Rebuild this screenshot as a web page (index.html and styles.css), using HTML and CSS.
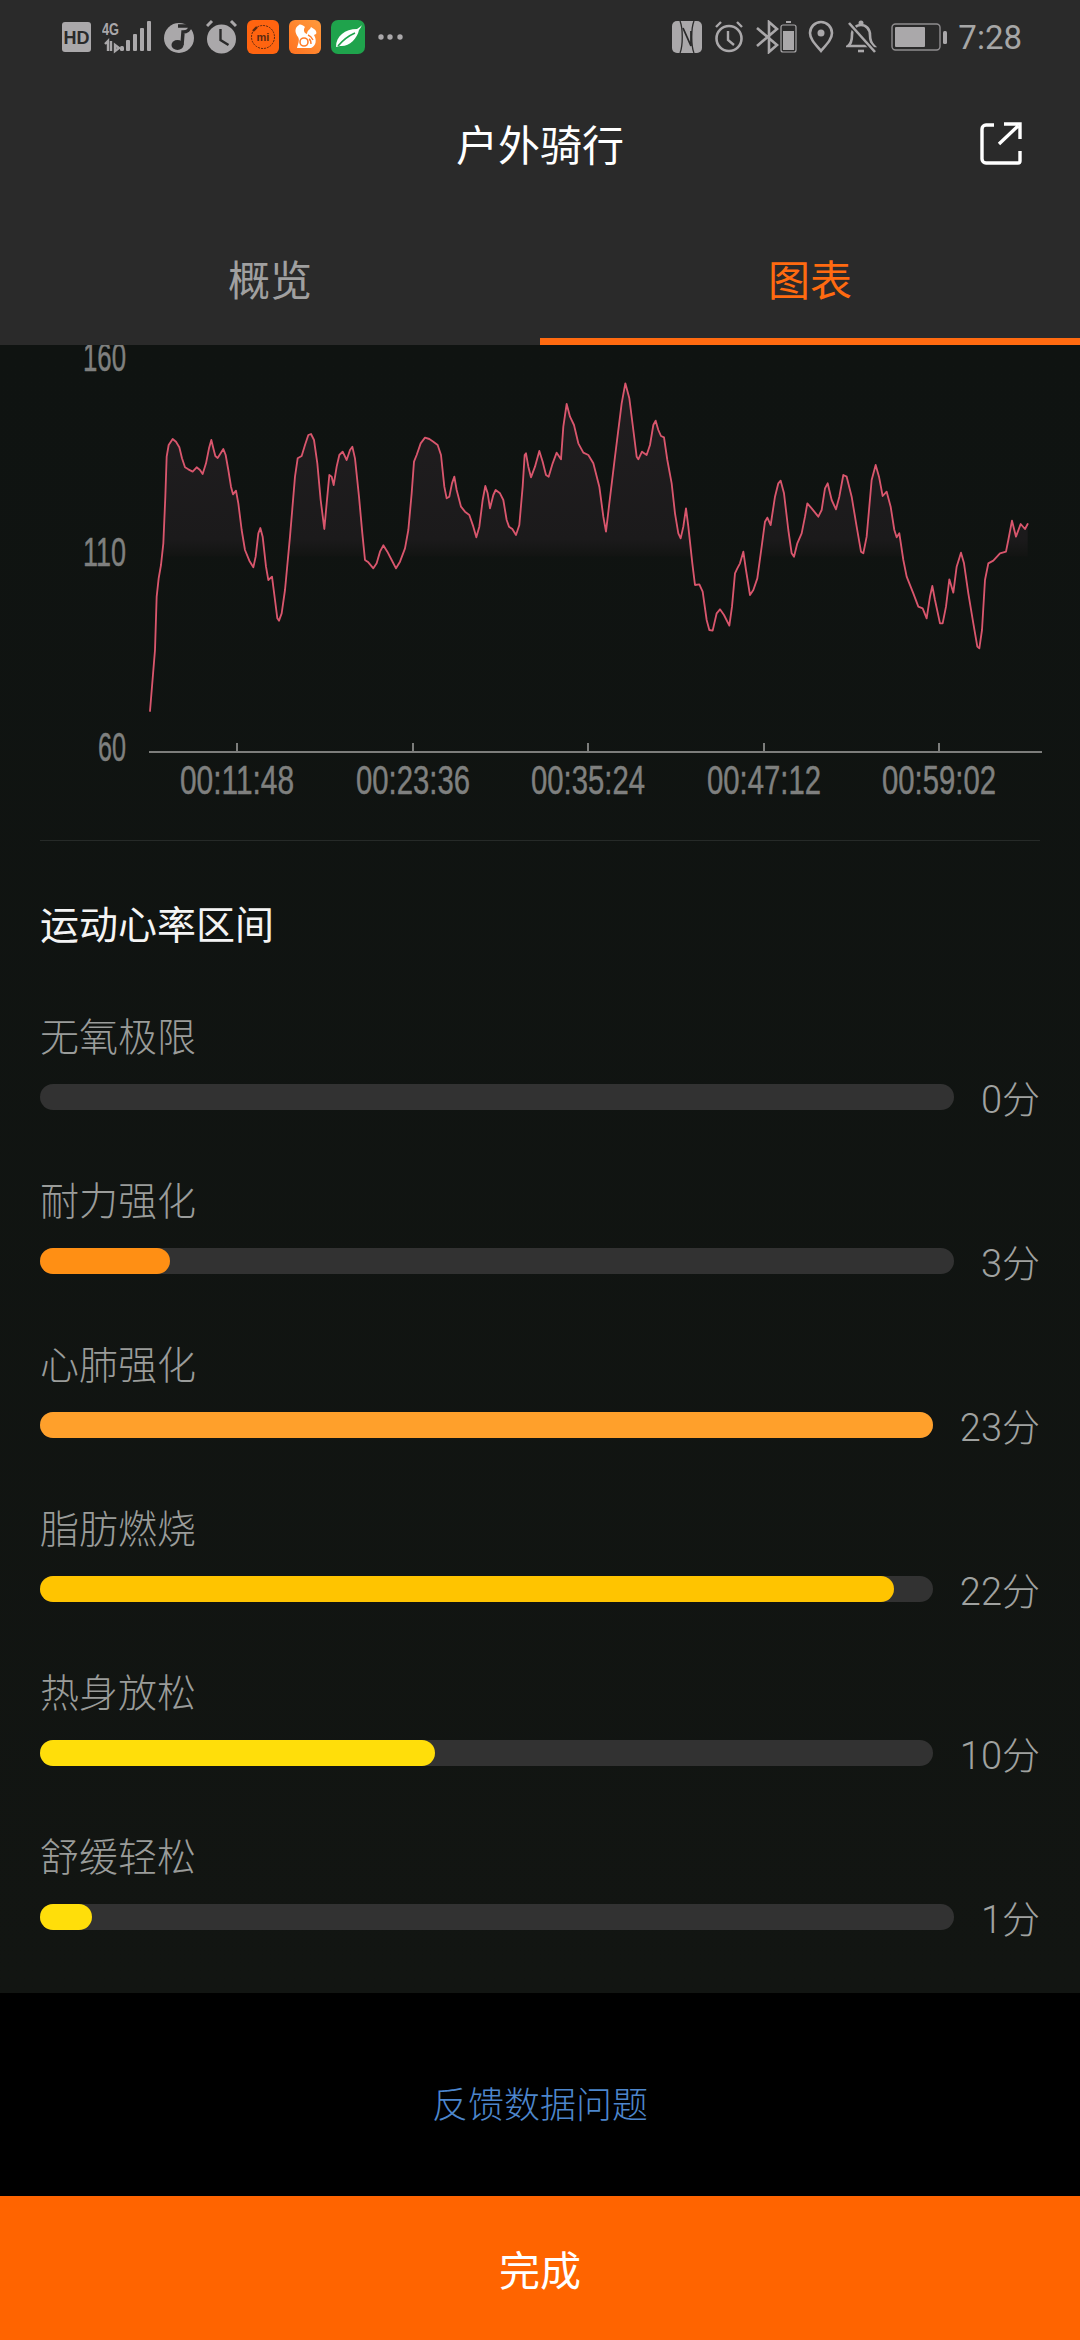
FILE: index.html
```html
<!DOCTYPE html>
<html lang="zh-CN">
<head>
    <meta charset="UTF-8">
    <title>户外骑行</title>
    <link rel="stylesheet" href="styles.css">
</head>
<body>
<div class="page">
    <header class="top">
        <!-- 状态栏 -->
        <div class="status">
            <div class="status-group">
                <svg width="30" height="32" viewBox="0 0 30 32"><rect y="1" width="29" height="30" rx="3" fill="#aaa8aa"/><text x="14.5" y="22.5" class="ic-hd">HD</text></svg>
                <svg width="52" height="34" viewBox="0 0 52 34">
                    <text x="0" y="15" class="ic-4g" textLength="17" lengthAdjust="spacingAndGlyphs">4G</text>
                    <path d="M3 24l3-3v10M9 21v10M13 25v6l4-3z" fill="none" stroke="#aaa8aa" stroke-width="2.4"/>
                    <g fill="#aaa8aa"><rect x="18" y="26" width="4" height="5" rx="1.5"/><rect x="24" y="20" width="4" height="11" rx="1"/><rect x="31" y="14" width="4" height="17" rx="1"/><rect x="38" y="8" width="4" height="23" rx="1"/><rect x="45" y="1" width="4" height="30" rx="1"/></g>
                </svg>
                <svg width="32" height="34" viewBox="0 0 32 34"><circle cx="15" cy="18" r="15" fill="#aaa8aa"/><path d="M14 6h12c0 4-3 6-7 6l-1 13" fill="none" stroke="#2a2a2a" stroke-width="3.5"/><ellipse cx="13.5" cy="25" rx="6" ry="5" fill="#2a2a2a"/></svg>
                <svg width="31" height="36" viewBox="0 0 31 36"><circle cx="15.5" cy="20" r="14.5" fill="#aaa8aa"/><path d="M1 7l5-5M30 7l-5-5" stroke="#aaa8aa" stroke-width="3"/><path d="M14.5 10v11l8 5" fill="none" stroke="#2a2a2a" stroke-width="2.4"/></svg>
                <svg width="32" height="34" viewBox="0 0 32 34"><rect width="32" height="34" rx="6" fill="#ff6410"/><circle cx="16" cy="17" r="11.5" fill="none" stroke="#5c2a10" stroke-width="1" stroke-dasharray="2 1"/><path d="M6 11l4-4" stroke="#5c2a10" stroke-width="2.4"/><text x="16" y="21" class="ic-mi">mi</text></svg>
                <svg width="32" height="34" viewBox="0 0 32 34">
                    <defs><linearGradient id="ucBg" x1="0" y1="1" x2="1" y2="0"><stop offset="0" stop-color="#ff7220"/><stop offset="1" stop-color="#ff9a3c"/></linearGradient></defs>
                    <rect width="32" height="34" rx="6" fill="url(#ucBg)"/>
                    <path d="M10 5C5 8 6 13 9 17c2 3 0 7-1 11h14c5-2 6-8 3-13l2-1c1-1 0-4-2-5l-3-2-1 2c-2 1-3 3-3 5-3-1-4-4-2-7-2-2-5-3-6-2z" fill="#fff"/>
                    <circle cx="15" cy="22" r="4" fill="none" stroke="#ff7d2a" stroke-width="1.6"/>
                    <path d="M19 15c3 1 4 3 5 5M20 19c2 1 2 3 2 5" fill="none" stroke="#ff7d2a" stroke-width="1.4"/>
                </svg>
                <svg width="35" height="34" viewBox="0 0 35 34"><rect width="34" height="34" rx="7" fill="#1fa34c"/><path d="M5 27C5 16 14 9 26 9c2-1 4-3 5-4-1 2-2 4-3 5-2 9-10 17-19 16z" fill="#fff"/><path d="M7 26c5-6 10-10 17-13" fill="none" stroke="#1fa34c" stroke-width="1.6"/></svg>
                <svg width="28" height="34" viewBox="0 0 28 34"><g fill="#aaa8aa"><circle cx="5" cy="17" r="2.7"/><circle cx="14" cy="17" r="2.7"/><circle cx="24" cy="17" r="2.7"/></g></svg>
            </div>
            <div class="status-group">
                <svg width="30" height="32" viewBox="0 0 30 32"><rect width="30" height="32" rx="5" fill="#aaa8aa"/><path d="M8 0c3 7 3 25 0 32M22 0c-3 7-3 25 0 32" fill="none" stroke="#2a2a2a" stroke-width="1.3"/><path d="M11 7l8 18V10" fill="none" stroke="#2a2a2a" stroke-width="1.8"/></svg>
                <svg width="34" height="34" viewBox="0 0 34 34"><circle cx="17" cy="18.5" r="12.5" fill="none" stroke="#aaa8aa" stroke-width="2.6"/><path d="M4 7l5-5M30 7l-5-5" stroke="#aaa8aa" stroke-width="2.4"/><path d="M16 11v9l6 5" fill="none" stroke="#aaa8aa" stroke-width="2.4"/></svg>
                <svg width="42" height="34" viewBox="0 0 42 34"><path d="M1 8l20 17-8 7V2l8 7L1 26" fill="none" stroke="#aaa8aa" stroke-width="2.6"/><rect x="25" y="5" width="15" height="27" rx="2" fill="none" stroke="#aaa8aa" stroke-width="1.2"/><rect x="30" y="1" width="5" height="2" fill="#aaa8aa"/><rect x="27" y="11" width="11" height="19" fill="#aaa8aa"/></svg>
                <svg width="28" height="34" viewBox="0 0 28 34"><path d="M13 31C7 24 2 19 2 13a11 11 0 0122 0c0 6-5 11-11 18z" fill="none" stroke="#aaa8aa" stroke-width="2.6"/><circle cx="13" cy="13" r="3.5" fill="#aaa8aa"/></svg>
                <svg width="35" height="36" viewBox="0 0 35 36"><path d="M2 27c3-2 4-5 4-11 0-6 4-10 9-10s9 4 9 10c0 4 1 8 4 11z" fill="none" stroke="#aaa8aa" stroke-width="2.6"/><path d="M2 3l27 30" stroke="#2a2a2a" stroke-width="5"/><path d="M3 4l26 29" stroke="#aaa8aa" stroke-width="2.6"/><path d="M12 32h6" stroke="#aaa8aa" stroke-width="2.6"/><circle cx="15" cy="4" r="2.5" fill="#aaa8aa"/></svg>
                <svg width="57" height="30" viewBox="0 0 57 30"><rect x="1" y="2" width="48" height="26" rx="3.5" fill="none" stroke="#8f8d8f" stroke-width="1.4"/><rect x="4" y="5" width="30" height="20" rx="1" fill="#aaa8aa"/><rect x="52" y="9" width="4" height="13" rx="1.5" fill="#aaa8aa"/></svg>
                <span class="clock">7:28</span>
            </div>
        </div>
        <!-- 标题 -->
        <div class="title-bar">
            <span></span>
            <h1>户外骑行</h1>
            <svg class="share" width="42" height="44" viewBox="0 0 42 44"><path d="M14 4H6a4 4 0 00-4 4v30a4 4 0 004 4h32a2 2 0 002-2V30" fill="none" stroke="#fff" stroke-width="3.4"/><path d="M19 23L38 5M24 3h16v15" fill="none" stroke="#fff" stroke-width="3.4"/></svg>
        </div>
        <!-- tab -->
        <div class="tabs">
            <div class="tab">概览</div>
            <div class="tab on">图表</div>
        </div>
    </header>

    <main class="content">
        <!-- 心率曲线 -->
        <svg class="chart" width="1080" height="495" viewBox="0 0 1080 495">
            <defs>
                <linearGradient id="hrFill" gradientUnits="userSpaceOnUse" x1="0" y1="150" x2="0" y2="680">
                    <stop offset="0" stop-color="#211e20"/>
                    <stop offset=".9" stop-color="#1b1a1b"/>
                    <stop offset="1" stop-color="#121412"/>
                </linearGradient>
                <clipPath id="hrClip"><rect x="0" y="0" width="3000" height="680"/></clipPath>
            </defs>
            <text class="axis" x="83" y="26" textLength="43" lengthAdjust="spacingAndGlyphs">160</text>
            <text class="axis" x="83" y="221" textLength="43" lengthAdjust="spacingAndGlyphs">110</text>
            <text class="axis" x="98" y="416" textLength="28" lengthAdjust="spacingAndGlyphs">60</text>

            <g transform="translate(60 -15) scale(.33333)">
                <path clip-path="url(#hrClip)" fill="url(#hrFill)" d="M270 1143L285 960 290 800 296 745 303 705 310 640 316 500 320 380 326 345 338 327 348 335 358 352 366 385 375 412 385 418 398 425 410 412 420 420 428 432 438 400 447 355 454 330 460 355 466 378 473 384 482 370 490 357 497 375 505 420 513 470 519 493 528 482 535 520 545 600 555 660 568 692 580 712 587 680 595 610 601 594 608 620 618 710 625 750 636 740 645 810 652 865 657 872 665 850 675 780 690 620 705 440 713 385 725 378 735 345 745 315 753 312 762 330 772 400 782 510 793 597 800 520 808 435 815 440 821 465 830 410 838 375 848 365 860 390 870 360 877 350 885 385 897 500 907 610 915 690 925 697 940 715 950 700 960 665 970 646 982 665 995 690 1008 715 1020 695 1035 655 1045 600 1055 490 1062 395 1070 375 1082 340 1095 323 1108 327 1120 335 1133 345 1143 375 1153 470 1160 505 1168 500 1176 460 1183 440 1190 480 1203 530 1215 545 1228 555 1240 590 1249 622 1258 590 1268 510 1276 468 1283 490 1290 535 1300 495 1307 480 1320 490 1330 510 1340 570 1347 590 1357 597 1368 615 1378 585 1388 470 1394 375 1398 370 1405 410 1413 442 1425 410 1438 363 1448 395 1458 435 1466 440 1478 400 1490 368 1503 388 1510 290 1520 222 1530 260 1542 285 1555 340 1570 368 1585 375 1600 400 1618 470 1630 560 1638 605 1648 520 1665 380 1685 220 1696 160 1708 205 1720 300 1730 380 1735 388 1746 365 1760 375 1770 345 1780 285 1787 272 1795 300 1803 318 1812 322 1822 390 1835 460 1845 550 1855 610 1862 625 1870 590 1878 535 1885 590 1897 700 1905 765 1918 763 1928 785 1940 870 1948 900 1958 902 1970 850 1980 838 1992 855 2008 887 2016 830 2025 730 2032 715 2040 700 2050 665 2058 720 2070 795 2080 780 2092 745 2105 650 2115 575 2122 563 2132 585 2145 500 2155 460 2162 452 2172 490 2185 600 2195 670 2202 680 2212 640 2225 610 2235 560 2242 520 2255 535 2275 560 2285 540 2295 475 2303 460 2315 510 2328 538 2338 500 2350 435 2360 440 2375 500 2390 590 2403 665 2410 670 2420 620 2435 450 2447 405 2457 440 2468 498 2480 485 2492 530 2503 600 2510 622 2518 610 2530 690 2540 740 2560 790 2575 830 2588 835 2600 865 2610 800 2617 768 2625 810 2640 880 2648 880 2658 830 2668 748 2680 788 2690 710 2703 668 2712 700 2725 790 2740 880 2752 950 2758 955 2766 900 2775 750 2785 700 2800 692 2820 670 2838 665 2845 630 2856 572 2868 620 2882 582 2895 597 2903 582L2903 680 270 680Z"/>
                <path fill="none" stroke="#d9566d" stroke-width="5.5" stroke-linejoin="round" stroke-linecap="round" d="M270 1143L285 960 290 800 296 745 303 705 310 640 316 500 320 380 326 345 338 327 348 335 358 352 366 385 375 412 385 418 398 425 410 412 420 420 428 432 438 400 447 355 454 330 460 355 466 378 473 384 482 370 490 357 497 375 505 420 513 470 519 493 528 482 535 520 545 600 555 660 568 692 580 712 587 680 595 610 601 594 608 620 618 710 625 750 636 740 645 810 652 865 657 872 665 850 675 780 690 620 705 440 713 385 725 378 735 345 745 315 753 312 762 330 772 400 782 510 793 597 800 520 808 435 815 440 821 465 830 410 838 375 848 365 860 390 870 360 877 350 885 385 897 500 907 610 915 690 925 697 940 715 950 700 960 665 970 646 982 665 995 690 1008 715 1020 695 1035 655 1045 600 1055 490 1062 395 1070 375 1082 340 1095 323 1108 327 1120 335 1133 345 1143 375 1153 470 1160 505 1168 500 1176 460 1183 440 1190 480 1203 530 1215 545 1228 555 1240 590 1249 622 1258 590 1268 510 1276 468 1283 490 1290 535 1300 495 1307 480 1320 490 1330 510 1340 570 1347 590 1357 597 1368 615 1378 585 1388 470 1394 375 1398 370 1405 410 1413 442 1425 410 1438 363 1448 395 1458 435 1466 440 1478 400 1490 368 1503 388 1510 290 1520 222 1530 260 1542 285 1555 340 1570 368 1585 375 1600 400 1618 470 1630 560 1638 605 1648 520 1665 380 1685 220 1696 160 1708 205 1720 300 1730 380 1735 388 1746 365 1760 375 1770 345 1780 285 1787 272 1795 300 1803 318 1812 322 1822 390 1835 460 1845 550 1855 610 1862 625 1870 590 1878 535 1885 590 1897 700 1905 765 1918 763 1928 785 1940 870 1948 900 1958 902 1970 850 1980 838 1992 855 2008 887 2016 830 2025 730 2032 715 2040 700 2050 665 2058 720 2070 795 2080 780 2092 745 2105 650 2115 575 2122 563 2132 585 2145 500 2155 460 2162 452 2172 490 2185 600 2195 670 2202 680 2212 640 2225 610 2235 560 2242 520 2255 535 2275 560 2285 540 2295 475 2303 460 2315 510 2328 538 2338 500 2350 435 2360 440 2375 500 2390 590 2403 665 2410 670 2420 620 2435 450 2447 405 2457 440 2468 498 2480 485 2492 530 2503 600 2510 622 2518 610 2530 690 2540 740 2560 790 2575 830 2588 835 2600 865 2610 800 2617 768 2625 810 2640 880 2648 880 2658 830 2668 748 2680 788 2690 710 2703 668 2712 700 2725 790 2740 880 2752 950 2758 955 2766 900 2775 750 2785 700 2800 692 2820 670 2838 665 2845 630 2856 572 2868 620 2882 582 2895 597 2903 582"/>
            </g>

            <path d="M149 407H1042M237 398v9M413 398v9M588 398v9M764 398v9M939 398v9" fill="none" stroke="#7c7d7b" stroke-width="2"/>
            <text class="axis" x="180" y="449" textLength="114" lengthAdjust="spacingAndGlyphs">00:11:48</text>
            <text class="axis" x="356" y="449" textLength="114" lengthAdjust="spacingAndGlyphs">00:23:36</text>
            <text class="axis" x="531" y="449" textLength="114" lengthAdjust="spacingAndGlyphs">00:35:24</text>
            <text class="axis" x="707" y="449" textLength="114" lengthAdjust="spacingAndGlyphs">00:47:12</text>
            <text class="axis" x="882" y="449" textLength="114" lengthAdjust="spacingAndGlyphs">00:59:02</text>
        </svg>

        <div class="zones">
            <h2>运动心率区间</h2>

            <div class="zone">
                <div class="zone-name">无氧极限</div>
                <div class="zone-bar">
                    <div class="track"></div>
                    <div class="mins">0分</div>
                </div>
            </div>
            <div class="zone">
                <div class="zone-name">耐力强化</div>
                <div class="zone-bar">
                    <div class="track"><div class="fill c1" style="width:14.2%"></div></div>
                    <div class="mins">3分</div>
                </div>
            </div>
            <div class="zone">
                <div class="zone-name">心肺强化</div>
                <div class="zone-bar">
                    <div class="track"><div class="fill c2" style="width:100%"></div></div>
                    <div class="mins">23分</div>
                </div>
            </div>
            <div class="zone">
                <div class="zone-name">脂肪燃烧</div>
                <div class="zone-bar">
                    <div class="track"><div class="fill c3" style="width:95.7%"></div></div>
                    <div class="mins">22分</div>
                </div>
            </div>
            <div class="zone">
                <div class="zone-name">热身放松</div>
                <div class="zone-bar">
                    <div class="track"><div class="fill c4" style="width:44.2%"></div></div>
                    <div class="mins">10分</div>
                </div>
            </div>
            <div class="zone">
                <div class="zone-name">舒缓轻松</div>
                <div class="zone-bar">
                    <div class="track"><div class="fill c4" style="width:5.7%"></div></div>
                    <div class="mins">1分</div>
                </div>
            </div>
        </div>
    </main>

    <div class="feedback">反馈数据问题</div>
    <div class="done">完成</div>
</div>
</body>
</html>
```

FILE: styles.css
```css
*{
    padding: 0;
    margin: 0;
    box-sizing: border-box;
}
body{
    background: #000;
    font-family: Roboto, "Noto Sans CJK SC", sans-serif;
}
svg{
    display: block;
    flex: none;
}
.page{
    width: 1080px;
    height: 2340px;
    display: flex;
    flex-direction: column;
    overflow: hidden;
}

/* 顶部 */
.top{
    background: #2a2a2a;
    height: 345px;
    flex: none;
}
.status{
    height: 74px;
    padding: 0 58px 0 62px;
    display: flex;
    justify-content: space-between;
    align-items: center;
}
.status-group{
    display: flex;
    align-items: center;
    gap: 10px;
}
.clock{
    font-size: 33px;
    color: #a6a6a6;
}
.ic-hd{
    font: bold 18px "Liberation Sans", sans-serif;
    fill: #2a2a2a;
    text-anchor: middle;
}
.ic-4g{
    font: bold 17px "Liberation Sans", sans-serif;
    fill: #aaa8aa;
}
.ic-mi{
    font: bold 11px "Liberation Sans", sans-serif;
    fill: #5c2a10;
    text-anchor: middle;
}
.title-bar{
    height: 142px;
    padding: 0 58px 5px;
    display: grid;
    grid-template-columns: 1fr auto 1fr;
    align-items: center;
}
.title-bar h1{
    font-size: 42px;
    font-weight: 400;
    color: #fff;
}
.share{
    justify-self: end;
}
.tabs{
    height: 129px;
    display: grid;
    grid-template-columns: 1fr 1fr;
}
.tab{
    font-size: 42px;
    color: #a0a0a0;
    display: flex;
    align-items: center;
    justify-content: center;
    border-bottom: 7px solid transparent;
}
.tab.on{
    color: #ff6a10;
    border-bottom-color: #ff6a10;
}

/* 曲线 */
.content{
    flex: 1;
    min-height: 0;
    background: linear-gradient(#0f1311, #121512);
}
.axis{
    font: 41px "Liberation Sans", sans-serif;
    fill: #7f807f;
    stroke: #7f807f;
    stroke-width: .5px;
}

/* 区间 */
.zones{
    margin: 0 40px;
    border-top: 1px solid #262a28;
}
.zones h2{
    margin-top: 57px;
    margin-bottom: 56px;
    font-size: 39px;
    font-weight: 400;
    line-height: 56px;
    color: #f4f4f4;
}
.zone{
    margin-bottom: 64px;
}
.zone:last-child{
    margin-bottom: 0;
}
.zone-name{
    font-size: 39px;
    font-weight: 300;
    line-height: 56px;
    color: #9a9c9a;
    margin-bottom: 18px;
}
.zone-bar{
    display: flex;
    align-items: center;
    gap: 27px;
    height: 26px;
}
.track{
    flex: 1;
    height: 26px;
    border-radius: 13px;
    background: #323232;
}
.fill{
    height: 26px;
    border-radius: 13px;
}
.c1{ background: #ff8f14; }
.c2{ background: #ffa02b; }
.c3{ background: #ffc400; }
.c4{ background: #ffde0a; }
.mins{
    font-size: 38px;
    font-weight: 300;
    color: #a0a2a0;
    white-space: nowrap;
    margin-top: -2px;
}

/* 底部 */
.feedback{
    flex: none;
    height: 203px;
    padding-top: 14px;
    display: flex;
    align-items: center;
    justify-content: center;
    background: #000;
    font-size: 36px;
    font-weight: 300;
    color: #4d86cc;
}
.done{
    flex: none;
    height: 144px;
    display: flex;
    align-items: center;
    justify-content: center;
    background: #ff6400;
    font-size: 41px;
    color: #fff;
}
```
